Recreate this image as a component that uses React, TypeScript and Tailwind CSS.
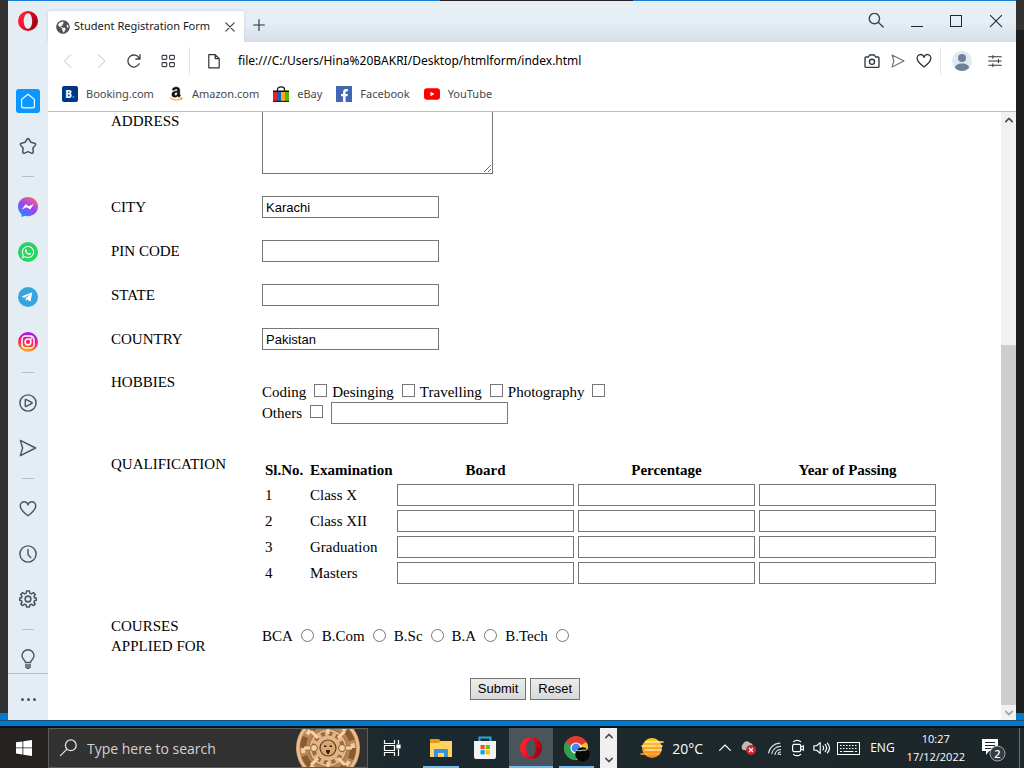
import React from "react";
import { FaFacebookF, FaGlobeAmericas, FaTelegramPlane, FaWhatsapp } from "react-icons/fa";

type IconProps = { children: React.ReactNode; size?: string; stroke?: string; width?: number };

function Line({ children, size = "size-5", stroke = "#4b5562", width = 1.4 }: IconProps) {
  return (
    <svg viewBox="0 0 20 20" className={`${size} shrink-0`} fill="none" stroke={stroke} strokeWidth={width} strokeLinejoin="round" strokeLinecap="round" aria-hidden="true">
      {children}
    </svg>
  );
}

function OperaLogo({ size = "size-5", id }: { size?: string; id: string }) {
  return (
    <svg viewBox="0 0 24 24" className={`${size} shrink-0`} aria-hidden="true">
      <defs>
        <linearGradient id={id} x1="0" y1="0" x2="1" y2="0.3">
          <stop offset="0.3" stopColor="#ff1b2d" />
          <stop offset="1" stopColor="#a3000f" />
        </linearGradient>
      </defs>
      <path fillRule="evenodd" fill={`url(#${id})`} d="M12 0a12 12 0 1 0 0 24 12 12 0 0 0 0-24Zm0 2.6c3 0 5 4.2 5 9.4s-2 9.4-5 9.4-5.2-4.2-5.2-9.4S9 2.6 12 2.6Z" />
    </svg>
  );
}

const heart = <path d="M10 17.5C6 14.5 1.5 11 1.5 7a4.3 4.3 0 0 1 8.5-1.5A4.3 4.3 0 0 1 18.5 7c0 4-4.5 7.5-8.5 10.5Z" />;
const plane = <path d="M1.5 1.5 18.5 10l-17 8.5L4 10Z" />;

function SideItem({ label, children, short }: { label: string; children: React.ReactNode; short?: boolean }) {
  return (
    <button type="button" aria-label={label} className={`flex w-full shrink-0 items-center justify-center ${short ? "h-9 pt-2" : "h-[45px]"}`}>
      {children}
    </button>
  );
}

function SideRule() {
  return (
    <div className="flex h-4 shrink-0 items-center justify-center">
      <div className="h-px w-3 bg-[#b1c0d2]" />
    </div>
  );
}

function Sidebar() {
  return (
    <nav aria-label="Sidebar" className="flex w-10 shrink-0 flex-col bg-[#e4ecf4]">
      <div className="flex h-[77px] shrink-0 justify-center pt-[10px]">
        <OperaLogo id="opera-side" />
      </div>
      <SideItem label="Start page">
        <span className="flex size-6 items-center justify-center rounded-[3px] bg-[#0a97ff]">
          <Line size="size-4" stroke="#fff" width={1.5}>
            <path d="M10 1.5 18 8v8.500a2 2 0 0 1-2 2H4a2 2 0 0 1-2-2V8Z" />
          </Line>
        </span>
      </SideItem>
      <SideItem label="Bookmarks">
        <Line size="size-[18px]" width={1.7}>
          <path d="M8.900 2.500Q10 .8 11.100 2.500L13.200 5.800 17.200 6.900Q19.300 7.600 18 9.300L15.500 12.300 15.800 16.500Q15.600 18.700 13.700 17.900L10 16.300 6.300 17.900Q4.400 18.700 4.200 16.500L4.500 12.300 2 9.300Q.7 7.600 2.800 6.900L6.800 5.800Z" />
        </Line>
      </SideItem>
      <SideRule />
      <SideItem label="Messenger">
        <svg viewBox="0 0 20 20" className="size-5" aria-hidden="true">
          <defs>
            <linearGradient id="msgr" x1="0.2" y1="1" x2="0.8" y2="0">
              <stop offset="0" stopColor="#1292ff" />
              <stop offset="0.5" stopColor="#9a42fa" />
              <stop offset="1" stopColor="#ff6968" />
            </linearGradient>
          </defs>
          <path fill="url(#msgr)" d="M10 0C15.600 0 20 4.100 20 9.600S15.600 19.200 10 19.200c-1 0-2-.1-2.900-.4L3.500 20v-2.800C1.300 15.400 0 12.700 0 9.600 0 4.100 4.400 0 10 0Z" />
          <path fill="#fff" d="m3.800 12.600 3.700-5.400 3.400 2 4.900-2.200-3.600 5.400-3.500-2.100Z" />
        </svg>
      </SideItem>
      <SideItem label="WhatsApp">
        <span className="flex size-5 items-center justify-center rounded-full bg-[#2bd366]"><FaWhatsapp className="size-[14px] text-white" /></span>
      </SideItem>
      <SideItem label="Telegram">
        <span className="flex size-5 items-center justify-center rounded-full bg-[#35a5de] pr-[2px]"><FaTelegramPlane className="size-3 text-white" /></span>
      </SideItem>
      <SideItem label="Instagram">
        <svg viewBox="0 0 20 20" className="size-5" fill="none" stroke="#fff" strokeWidth="1.5" aria-hidden="true">
          <defs>
            <linearGradient id="insta" x1="0.4" y1="1" x2="0.6" y2="0">
              <stop offset="0" stopColor="#ffc51a" />
              <stop offset="0.3" stopColor="#ff4b2b" />
              <stop offset="0.6" stopColor="#f0128a" />
              <stop offset="1" stopColor="#9a1cf2" />
            </linearGradient>
          </defs>
          <circle cx="10" cy="10" r="10" fill="url(#insta)" stroke="none" />
          <rect x="4" y="4" width="12" height="12" rx="3.5" />
          <circle cx="10" cy="10" r="2.9" />
          <circle cx="13.5" cy="6.5" r="0.4" />
        </svg>
      </SideItem>
      <SideRule />
      <SideItem label="Player">
        <Line size="size-[18px]" width={1.6}><circle cx="10" cy="10" r="9" /><path d="M7 6.800c0-.7.500-.9 1.100-.6L14 9.200c.8.400.8 1.200 0 1.600l-5.900 3c-.6.300-1.100.1-1.100-.6Z" /></Line>
      </SideItem>
      <SideItem label="My Flow"><Line size="size-[18px]" width={1.6}>{plane}</Line></SideItem>
      <SideRule />
      <SideItem label="Pinboards"><Line size="size-[18px]" width={1.6}>{heart}</Line></SideItem>
      <SideItem label="History">
        <Line size="size-[18px]" width={1.6}><circle cx="10" cy="10" r="9" /><path d="M10 5v5.500l3 3.500" /></Line>
      </SideItem>
      <SideItem label="Settings">
        <Line size="size-[18px]" width={1.7}>
          <circle cx="10" cy="10" r="3.2" />
          <path d="M8.500 1h3l.5 2.500 1.800.8L16 2.900 18 5l-1.300 2.100.7 1.700 1.800.2v2.500l-1.900.5-.7 1.700L18 15.500 16 17.300l-2.200-1.500-1.800.8-.5 2.400h-3L8 16.600l-1.800-.8L4 17.300 2 15.500l1.400-1.800-.7-1.700-1.900-.5V9l1.800-.2.700-1.700L2 5l2-2.100 2.200 1.400L8 3.500Z" />
        </Line>
      </SideItem>
      <SideRule />
      <SideItem label="Tips" short>
        <svg viewBox="0 0 16 20" className="h-5 w-4" fill="none" stroke="#4b5562" strokeWidth="1.4" aria-hidden="true">
          <path d="M5.500 13.500c0-2-3.500-3.500-3.500-6.800a6 6 0 0 1 12 0c0 3.300-3.500 4.800-3.500 6.800ZM5 16h6M5 18h6M6.500 19.700h3" />
        </svg>
      </SideItem>
      <button type="button" aria-label="Sidebar setup" className="flex flex-1 items-center justify-center gap-[3px] border-t border-[#afbccb] pt-1">
        <span className="size-[3px] rounded-full bg-[#4b5562]" />
        <span className="size-[3px] rounded-full bg-[#4b5562]" />
        <span className="size-[3px] rounded-full bg-[#4b5562]" />
      </button>
    </nav>
  );
}

function TabBar() {
  return (
    <div className="flex h-[41px] shrink-0 items-end bg-linear-to-b from-[#e6eef6] from-50% to-[#d6dfe8]">
      <div className="flex h-[31px] w-[196px] items-center rounded-t-[2px] bg-white px-2 shadow-[0_0_3px_#c3d0de]">
        <FaGlobeAmericas className="size-[14px] shrink-0 text-[#4f5357]" />
        <span className="ml-1 flex-1 whitespace-nowrap text-[11px] text-[#15181b]">Student Registration Form</span>
        <button type="button" aria-label="Close tab">
          <Line size="size-3" stroke="#2b3036" width={1.7}><path d="m3 3 14 14M17 3 3 17" /></Line>
        </button>
      </div>
      <button type="button" aria-label="New tab" className="mb-[11px] ml-[9px]">
        <Line size="size-3" stroke="#2b3036" width={1.8}><path d="M10 1v18M1 10h18" /></Line>
      </button>
      <div className="mr-[13px] mb-[13px] ml-auto flex items-center gap-[27px]">
        <button type="button" aria-label="Search tabs"><Line size="size-4" stroke="#3a4149" width={1.7}><circle cx="8" cy="7" r="6.5" /><path d="m13 12 6 5.500" /></Line></button>
        <button type="button" aria-label="Minimize" className="pt-[10px]"><span className="block h-px w-3 bg-[#22272c]" /></button>
        <button type="button" aria-label="Maximize"><span className="block size-3 border border-[#22272c]" /></button>
        <button type="button" aria-label="Close"><Line size="size-[14px]" stroke="#22272c" width={1.5}><path d="m2 2 16 16M18 2 2 18" /></Line></button>
      </div>
    </div>
  );
}

function AddressBar() {
  return (
    <div className="flex h-[38px] shrink-0 items-center bg-white">
      <div className="flex flex-1 items-center">
        <button type="button" aria-label="Back" className="ml-[13px]"><Line size="size-[14px]" stroke="#b9bdc2"><path d="m14 1-9 9 9 9" /></Line></button>
        <button type="button" aria-label="Forward" className="ml-5"><Line size="size-[14px]" stroke="#b9bdc2"><path d="m5 1 9 9-9 9" /></Line></button>
        <button type="button" aria-label="Reload" className="ml-[17px]">
          <Line size="size-4" stroke="#3a4149" width={1.6}><path d="M16.500 13.500a7.500 7.500 0 1 1 .2-6.500M17.500 2v5.500h-5.200" /></Line>
        </button>
        <button type="button" aria-label="Speed dial" className="ml-[18px]">
          <Line size="size-4" stroke="#3a4149" width={1.4}><rect x="2.5" y="3" width="6" height="5" rx="1" /><rect x="12" y="3" width="6" height="5" rx="1" /><rect x="2.5" y="12" width="6" height="5" rx="1" /><rect x="12" y="12" width="6" height="5" rx="1" /></Line>
        </button>
        <div className="mr-4 ml-[13px] h-7 w-px bg-[#e2e5e9]" />
        <Line size="size-4" stroke="#2c3238" width={1.5}><path d="M3.500 2h8l5 5v11.500h-13ZM11.500 2v5h5" /></Line>
        <input aria-label="Address" defaultValue="file:///C:/Users/Hina%20BAKRI/Desktop/htmlform/index.html" className="ml-4 min-w-0 flex-1 bg-transparent text-[12px] text-black outline-none" />
      </div>
      <div className="flex items-center">
        <button type="button" aria-label="Snapshot"><Line size="size-4" stroke="#2f3740" width={1.7}><path d="M2.500 5h3l1.500-2.500h6L14.500 5h3c.8 0 1.200.5 1.200 1.200v10.600c0 .7-.4 1.200-1.200 1.200h-15c-.7 0-1.200-.5-1.200-1.200V6.200C1.300 5.500 1.800 5 2.500 5Z" /><circle cx="10" cy="11" r="3.2" /></Line></button>
        <button type="button" aria-label="Send" className="ml-[11px]"><Line size="size-[14px]" stroke="#6d7176" width={1.6}>{plane}</Line></button>
        <button type="button" aria-label="Add to favourites" className="ml-[11px]"><Line size="size-4" stroke="#2f3740" width={1.7}>{heart}</Line></button>
        <div className="ml-2 h-7 w-px bg-[#e2e5e9]" />
        <button type="button" aria-label="Profile" className="ml-[11px]">
          <svg viewBox="0 0 20 20" className="size-5" aria-hidden="true">
            <circle cx="10" cy="10" r="10" fill="#dfe9f2" />
            <circle cx="10" cy="7" r="4" fill="#6f8196" />
            <path d="M3 17c0-3 3-4.500 7-4.500s7 1.500 7 4.500c-4 4-10 4-14 0Z" fill="#6f8196" />
          </svg>
        </button>
        <button type="button" aria-label="Easy setup" className="mr-[14px] ml-4">
          <Line size="size-[14px]" stroke="#2f3740" width={1.5}><path d="M1 4h18M1 10h18M1 16h18M7 2v4M15 8v4M7 14v4" /></Line>
        </button>
      </div>
    </div>
  );
}

function Bookmark({ label, children }: { label: string; children: React.ReactNode }) {
  return (
    <a href="#" className="flex items-center gap-2 text-[11px] text-[#45484c]">
      {children}
      <span>{label}</span>
    </a>
  );
}

function BookmarksBar() {
  return (
    <div className="flex h-[32px] shrink-0 items-center gap-[14px] border-b border-[#b3becb] bg-white pb-[3px] pl-[14px]">
      <Bookmark label="Booking.com">
        <span className="flex size-4 items-center justify-center rounded-[2px] bg-[#013686] text-[10px] font-extrabold text-white">B<span className="text-[#12a5ee]">.</span></span>
      </Bookmark>
      <Bookmark label="Amazon.com">
        <svg viewBox="0 0 16 16" className="size-4" aria-hidden="true">
          <path d="M4.200 4c.3-1.900 1.800-3 3.900-3 2.300 0 3.700 1.200 3.700 3.200v3.700c0 .9.400 1.300.9 1.800L11 11.300c-.7-.4-1.100-.9-1.400-1.400-.8 1-1.700 1.400-2.900 1.400C5 11.300 3.800 10.200 3.800 8.500c0-2.500 2.200-3.400 5.600-3.500 0-1.300-.3-1.900-1.300-1.900-.9 0-1.400.4-1.600 1.200Zm5.200 2.600c-1.700 0-2.900.4-2.900 1.700 0 .8.400 1.300 1.100 1.300 1.300 0 1.800-1.100 1.800-3Z" fill="#111" stroke="#111" strokeWidth="0.4" />
          <path d="M2 12c3.500 2.300 8 2.400 11.500.6M12 11.800l2 .2-.4 1.800" fill="none" stroke="#f7a81b" strokeWidth="1.2" />
        </svg>
      </Bookmark>
      <Bookmark label="eBay">
        <svg viewBox="0 0 16 16" className="size-4" aria-hidden="true">
          <path d="M4.500 5V3.500C4.500 0 11.500 0 11.500 3.500V5" fill="none" stroke="#111" strokeWidth="1.2" />
          <path d="M0 4.500h16V7H0z" fill="#111" />
          <path d="M0 6h4v10H0z" fill="#e6202c" /><path d="M4 6h4v10H4z" fill="#0d62d1" /><path d="M8 6h4v10H8z" fill="#f5b400" /><path d="M12 6h4v10h-4z" fill="#5fae13" />
          <path d="M0 14.800h16V16H0z" fill="#222" />
        </svg>
      </Bookmark>
      <Bookmark label="Facebook">
        <span className="flex size-4 items-end justify-end bg-[#4267b2] pr-[1px]"><FaFacebookF className="size-[13px] text-white" /></span>
      </Bookmark>
      <Bookmark label="YouTube">
        <svg viewBox="0 0 16 16" className="size-4" aria-hidden="true"><rect y="2.3" width="16" height="11.4" rx="3" fill="#f00" /><path d="M6.500 5.700v4.600L10.500 8Z" fill="#fff" /></svg>
      </Bookmark>
    </div>
  );
}

const fieldClass = "block h-[22px] w-[177px] border border-[#767676] bg-white px-[3px] font-['Liberation_Sans',Arial,sans-serif] text-[13px] text-black";

function TextRow({ id, label, value }: { id: string; label: string; value?: string }) {
  return (
    <div className="grid grid-cols-[151px_auto] items-center">
      <label htmlFor={id}>{label}</label>
      <input id={id} type="text" defaultValue={value} className={fieldClass} />
    </div>
  );
}

function Check({ label }: { label: string }) {
  return (
    <label className="flex gap-2">
      {label}
      <input type="checkbox" className="mt-[2px] size-[13px] appearance-none border border-[#767676] bg-white checked:bg-[#0075ff]" />
    </label>
  );
}

const exams = ["Class X", "Class XII", "Graduation", "Masters"];
const columns = ["Board", "Percentage", "Year of Passing"];
const courses = ["BCA", "B.Com", "B.Sc", "B.A", "B.Tech"];

function RegistrationForm() {
  return (
    <form onSubmit={(e) => e.preventDefault()} className="ml-[63px] flex w-fit flex-col gap-[22px] font-['Liberation_Serif','Times_New_Roman',serif] text-[15px] leading-5 text-black">
      <div className="grid grid-cols-[151px_auto]">
        <label htmlFor="address" className="leading-[18px]">ADDRESS</label>
        <textarea id="address" className="block h-[62px] w-[231px] border border-t-0 border-[#767676] bg-white p-[3px]" />
      </div>
      <TextRow id="city" label="CITY" value="Karachi" />
      <TextRow id="pin" label="PIN CODE" />
      <TextRow id="state" label="STATE" />
      <TextRow id="country" label="COUNTRY" value="Pakistan" />
      <div className="grid grid-cols-[151px_auto]">
        <span>HOBBIES</span>
        <div className="flex flex-col pt-[10px]">
          <div className="flex gap-[5px]">
            <Check label="Coding" />
            <Check label="Desinging" />
            <Check label="Travelling" />
            <Check label="Photography" />
          </div>
          <div className="flex items-center gap-2">
            <Check label="Others" />
            <input type="text" aria-label="Other hobbies" className={fieldClass} />
          </div>
        </div>
      </div>
      <div className="mt-2 grid grid-cols-[151px_auto]">
        <span>QUALIFICATION</span>
        <table className="mt-[3px] border-separate border-spacing-[2px]">
          <thead>
            <tr>
              <th className="w-[43px] p-px text-left">Sl.No.</th>
              <th className="w-[85px] p-px text-left">Examination</th>
              {columns.map((c) => <th key={c} className="p-px">{c}</th>)}
            </tr>
          </thead>
          <tbody>
            {exams.map((exam, i) => (
              <tr key={exam}>
                <td className="p-px">{i + 1}</td>
                <td className="p-px">{exam}</td>
                {columns.map((c) => (
                  <td key={c} className="p-px"><input type="text" aria-label={`${exam} ${c}`} className={fieldClass} /></td>
                ))}
              </tr>
            ))}
          </tbody>
        </table>
      </div>
      <div className="mt-[7px] grid grid-cols-[151px_auto] items-center">
        <span>COURSES<br />APPLIED FOR</span>
        <div className="flex gap-2">
          {courses.map((c) => (
            <label key={c} className="flex gap-2">
              {c}
              <input type="radio" name="course" className="mt-[3px] size-[13px] appearance-none rounded-full border border-[#767676] bg-white checked:bg-[#0075ff]" />
            </label>
          ))}
        </div>
      </div>
      <div className="flex justify-center gap-1 font-['Liberation_Sans',Arial,sans-serif] text-[13px]">
        <button type="submit" className="h-[22px] border border-[#767676] bg-linear-to-b from-[#ececec] to-[#d9d9d9] px-[7px] leading-5">Submit</button>
        <button type="reset" className="h-[22px] border border-[#767676] bg-linear-to-b from-[#ececec] to-[#d9d9d9] px-[7px] leading-5">Reset</button>
      </div>
    </form>
  );
}

function Scrollbar() {
  return (
    <div className="flex w-[15px] shrink-0 flex-col bg-[#f1f1f1]">
      <div className="flex h-[15px] items-center justify-center"><Line size="size-2" stroke="#505050" width={4.5}><path d="m2 14 8-8 8 8" /></Line></div>
      <div className="flex-[218]" />
      <div className="flex-[360] bg-[#cdcdcd]" />
      <div className="flex h-[15px] items-center justify-center"><Line size="size-2" stroke="#a3a3a3" width={4.5}><path d="m2 6 8 8 8-8" /></Line></div>
    </div>
  );
}

function Taskbar() {
  return (
    <footer className="flex h-10 shrink-0 items-stretch bg-linear-to-r from-[#27221f] via-[#1b2a2f] via-40% to-[#1d2629] font-['Open_Sans','Segoe_UI',sans-serif] text-white">
      <button type="button" aria-label="Start" className="flex w-12 items-center justify-center">
        <svg viewBox="0 0 16 16" className="size-4" fill="#fff" aria-hidden="true"><path d="M0 2.300 6.500 1.400v6.100H0ZM7.300 1.300 16 0v7.500H7.300ZM0 8.300h6.500v6.200L0 13.600ZM7.300 8.300H16V16l-8.700-1.300Z" /></svg>
      </button>
      <div className="flex w-[320px] items-center overflow-hidden border border-[#5c5c5c] bg-[#323232] pl-[11px]">
        <Line size="size-[18px]" stroke="#e5e5e5" width={1.4}><circle cx="12" cy="7" r="6" /><path d="m7.500 11.500-7 7" /></Line>
        <input aria-label="Search" placeholder="Type here to search" className="ml-[9px] min-w-0 flex-1 bg-transparent text-[14px] placeholder-[#d2d2d2] outline-none" />
        <svg viewBox="0 0 64 64" className="mr-[7px] size-16 shrink-0" aria-hidden="true">
          <circle cx="32" cy="32" r="32" fill="#b98555" />
          <circle cx="32" cy="32" r="30" fill="none" stroke="#e8bd8d" strokeWidth="3" />
          <circle cx="32" cy="32" r="25" fill="none" stroke="#8a5a34" strokeWidth="6" strokeDasharray="11 8.6" />
          <circle cx="32" cy="32" r="25" fill="none" stroke="#f2cfa4" strokeWidth="4" strokeDasharray="5 14.6" strokeDashoffset="-14" />
          <circle cx="32" cy="32" r="19" fill="#e3b584" stroke="#a8764a" strokeWidth="1.5" />
          <circle cx="32" cy="32" r="14.5" fill="none" stroke="#9b6a40" strokeWidth="4" strokeDasharray="4 3.6" />
          <path d="M32 8v10M32 46v10M8 32h10M46 32h10M15 15l7 7M42 42l7 7M49 15l-7 7M22 42l-7 7" stroke="#f4d3aa" strokeWidth="3" />
          <circle cx="18" cy="32" r="3.5" fill="#f2cfa4" stroke="#8a5a34" /><circle cx="46" cy="32" r="3.5" fill="#f2cfa4" stroke="#8a5a34" />
          <circle cx="32" cy="32" r="8" fill="#dba672" stroke="#5e3a20" strokeWidth="1.2" />
          <path d="M28 29.500h2.500V31H28zM33.500 29.500H36V31h-2.500zM30 34h4v2.500h-1v1.500h-2v-1.500h-1z" fill="#3c2414" />
        </svg>
      </div>
      <button type="button" aria-label="Task view" className="flex w-12 items-center justify-center">
        <svg viewBox="0 0 18 16" className="h-4 w-[18px]" fill="none" stroke="#fff" strokeWidth="1.2" aria-hidden="true"><path d="M1.500 0v3.500h10V0M1.500 16v-3.500h10V16M1.500 5.500h10v5h-10ZM15.500 0v4M15.500 9v7" /><path d="M14 5h3v3h-3z" fill="#fff" /></svg>
      </button>
      <button type="button" aria-label="File Explorer" className="flex w-[50px] flex-col items-center justify-end">
        <svg viewBox="0 0 22 18" className="mb-[9px] h-[18px] w-[22px]" aria-hidden="true">
          <path d="M0 0h9l1.500 2H22v16H0Z" fill="#e19d12" /><path d="M0 4h9l2-2h11v16H0Z" fill="#ffd35c" /><path d="M4 18v-6.500C4 10.500 4.500 10 5.500 10h11c1 0 1.500.5 1.500 1.500V18h-4v-4H8v4Z" fill="#3b92dc" />
        </svg>
        <span className="h-[2px] w-9 bg-[#76b9ed]" />
      </button>
      <button type="button" aria-label="Microsoft Store" className="flex w-[43px] items-center justify-center pr-[5px]">
        <svg viewBox="0 0 24 24" className="size-6" aria-hidden="true">
          <path d="M6.500 6V1.500h11V6" fill="none" stroke="#29a8e8" strokeWidth="2" /><path d="M1 5h22v16a2 2 0 0 1-2 2H3a2 2 0 0 1-2-2Z" fill="#f3f3f3" />
          <path d="M7.500 9h4.200v4.200H7.500z" fill="#f25022" /><path d="M12.700 9h4.200v4.200h-4.200z" fill="#7fba00" /><path d="M7.500 14.200h4.200v4.200H7.500z" fill="#00a4ef" /><path d="M12.700 14.200h4.200v4.200h-4.200z" fill="#ffb900" />
        </svg>
      </button>
      <button type="button" aria-label="Opera" className="flex w-11 flex-col items-center justify-end bg-[#49555b]">
        <span className="mb-[7px]"><OperaLogo id="opera-task" size="size-[22px]" /></span>
        <span className="h-[2px] w-full bg-[#76b9ed]" />
      </button>
      <button type="button" aria-label="Chrome" className="flex w-[47px] flex-col items-center justify-end">
        <svg viewBox="0 0 26 26" className="mb-[4px] size-[26px]" aria-hidden="true">
          <circle cx="12" cy="12" r="12" fill="#e33b2e" />
          <path d="M12 12 1.600 6A12 12 0 0 0 12 24l5-9Z" fill="#2ba24c" /><path d="M12 12 22.400 6A12 12 0 0 1 12 24l5.200-9Z" fill="#fcc31e" /><path d="M12 6.500h10.600L20 3.200H7Z" fill="#e33b2e" />
          <circle cx="12" cy="12" r="5.6" fill="#fff" /><circle cx="12" cy="12" r="4.4" fill="#4285f4" />
          <circle cx="18.5" cy="18.5" r="7.2" fill="#080808" /><path d="M12 14.500c1.500-1 3 1 5 0s4 .5 6-1" stroke="#ddd" strokeWidth="1" fill="none" />
        </svg>
        <span className="h-[2px] w-[35px] bg-[#76b9ed]" />
      </button>
      <div className="flex w-[17px] flex-col items-center justify-between bg-[#f0f0f0] py-1">
        <Line size="size-2" stroke="#505050" width={4}><path d="m2 14 8-8 8 8" /></Line>
        <Line size="size-2" stroke="#505050" width={4}><path d="m2 6 8 8 8-8" /></Line>
      </div>
      <div className="ml-auto flex items-center">
        <button type="button" className="flex items-center gap-2 text-[14px]">
          <svg viewBox="0 0 24 20" className="h-5 w-6" aria-hidden="true">
            <defs><linearGradient id="sun" x1="0" y1="0" x2="0" y2="1"><stop offset="0" stopColor="#ffd21f" /><stop offset="1" stopColor="#f58220" /></linearGradient></defs>
            <circle cx="12" cy="10" r="10" fill="url(#sun)" />
            <path d="M6 4h17M2 8h14M18 8h4M5 12h16" stroke="#ffe3ad" strokeWidth="1.6" strokeLinecap="round" /><path d="M1 16h18" stroke="#ffab4a" strokeWidth="1.4" strokeLinecap="round" />
          </svg>
          20°C
        </button>
        <button type="button" aria-label="Show hidden icons" className="ml-4"><Line size="size-3" stroke="#fff" width={1.9}><path d="m1 14 9-9 9 9" /></Line></button>
        <svg viewBox="0 0 18 16" className="ml-2 h-4 w-[18px]" aria-hidden="true"><path d="M4 10a4 4 0 0 1 0-6c1-3 5-4 7-1 2 0 3 2 3 4v4Z" fill="#b9bcbe" /><circle cx="12" cy="10" r="5" fill="#d5202f" /><path d="m10 8 4 4m0-4-4 4" stroke="#fff" strokeWidth="1.2" /></svg>
        <div className="ml-[10px] flex items-center gap-[6px]">
          <Line size="size-4" stroke="#d8dcde" width={1.5}><path d="M2 16A15 15 0 0 1 16 4M6 17a11 11 0 0 1 11-9M10 18a7 7 0 0 1 7-6M14 18c0-2 1-3 3-3M16 18h1" /></Line>
          <Line size="size-[18px]" stroke="#fff" width={1.3}><rect x="4" y="6" width="9" height="8" rx="1.5" /><path d="m13 9 3-1.500v5L13 11M5 3c2-2 6-2 8 0M5 17c2 2 6 2 8 0" /></Line>
          <Line size="size-[18px]" stroke="#fff" width={1.3}><path d="M1 7.500h3L8 4v12l-4-3.500H1ZM11 8c1 1.300 1 2.700 0 4M13.500 6c2 2.500 2 5.500 0 8M16 4.500c3 3.500 3 7.500 0 11" /></Line>
          <svg viewBox="0 0 23 13" className="h-[13px] w-[23px]" fill="none" stroke="#fff" aria-hidden="true"><rect x="0.5" y="0.5" width="22" height="12" /><path d="M3 3.500h17M3 6.500h17" strokeDasharray="1.5 1.5" /><path d="M3 9.500h2M6.500 9.500h10M18 9.500h2" /></svg>
        </div>
        <span className="ml-[10px] text-[12px]">ENG</span>
        <div className="ml-3 flex flex-col items-center text-[11px] leading-[18px]"><span>10:27</span><span>17/12/2022</span></div>
        <button type="button" aria-label="2 notifications" className="ml-4 pt-1">
          <svg viewBox="0 0 26 26" className="size-[26px]" aria-hidden="true">
            <path d="M1 2h16v12H8l-3 4v-4H1Z" fill="#fff" /><path d="M4 5.500h10M4 8.500h10M4 11.500h6" stroke="#1d2629" />
            <circle cx="16.5" cy="16.5" r="7.5" fill="#333b3e" stroke="#a8adaf" />
            <text x="16.5" y="20.500" textAnchor="middle" fontSize="11" fontWeight="600" fill="#fff">2</text>
          </svg>
        </button>
        <div className="mr-1 ml-3 h-10 w-px bg-[#6b7275]" />
      </div>
    </footer>
  );
}

export default function App() {
  return (
    <div className="flex h-screen flex-col overflow-hidden bg-[#0d1117] font-['Noto_Sans','Segoe_UI',sans-serif]">
      <div className="flex min-h-0 flex-1">
        <div className="flex w-2 shrink-0 flex-col"><div className="flex-1 bg-[#323232]" /><div className="h-[7px] bg-[#007acc]" /></div>
        <div className="flex min-w-0 flex-1 flex-col">
          <div className="flex h-px shrink-0">
            <div className="flex-[432] bg-[#1a7fd4]" />
            <div className="flex-[193] bg-[#262024]" />
            <div className="flex-[383] bg-[#1a7fd4]" />
          </div>
          <div className="flex min-h-0 flex-1">
            <Sidebar />
            <div className="flex min-w-0 flex-1 flex-col">
              <TabBar />
              <AddressBar />
              <BookmarksBar />
              <main className="flex min-h-0 flex-1 bg-white">
                <div className="min-w-0 flex-1 overflow-hidden"><RegistrationForm /></div>
                <Scrollbar />
              </main>
            </div>
          </div>
        </div>
        <div className="flex w-2 shrink-0 flex-col"><div className="h-[30px] bg-[#323232]" /><div className="flex-1 bg-[#1e1e1e]" /><div className="h-[7px] bg-[#007acc]" /></div>
      </div>
      <div className="mb-[2px] h-[6px] shrink-0 border-t border-[#1d4a6e] bg-[#007acc]" />
      <Taskbar />
    </div>
  );
}
